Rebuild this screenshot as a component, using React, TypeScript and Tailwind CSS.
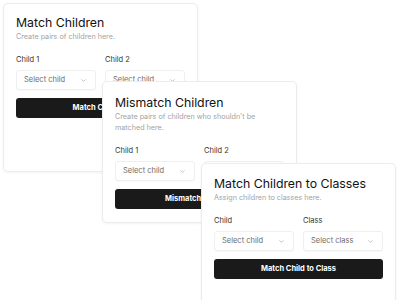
import React from "react";

function Chevron() {
  return (
    <svg width="7" height="7" viewBox="0 0 24 24" fill="none" stroke="#9ca3af" strokeWidth="2.2" strokeLinecap="round" strokeLinejoin="round">
      <path d="m6 9 6 6 6-6" />
    </svg>
  );
}

function Select({ label }: { label: string }) {
  return (
    <div className="flex h-[20px] items-center justify-between rounded-[3px] border border-[#efefef] bg-white pl-[7px] pr-[8px] shadow-[0_1px_1px_rgba(0,0,0,0.03)]">
      <span className="text-[7.5px] leading-none text-[#6b6b6b]">{label}</span>
      <Chevron />
    </div>
  );
}

type Field = { label: string; placeholder: string };

function Card({
  className,
  title,
  desc,
  fields,
  button,
}: {
  className: string;
  title: string;
  desc: React.ReactNode;
  fields: Field[];
  button: string;
}) {
  return (
    <div className={"absolute w-[195px] rounded-[5px] border border-[#ececec] bg-white px-[12px] shadow-[0_1px_3px_rgba(0,0,0,0.05)] " + className}>
      <div className="pt-[1px] text-[12.3px] leading-[15px] font-normal text-[#111111]">{title}</div>
      <div className="mt-[1px] text-[7.2px] leading-[11px] text-[#a3a3a3]">{desc}</div>
      <div className="mt-[13px] grid grid-cols-2 gap-x-[9px]">
        {fields.map((f) => (
          <div key={f.label} className="flex flex-col">
            <div className="text-[7.5px] leading-[10px] text-[#333333]">{f.label}</div>
            <div className="mt-[5px]">
              <Select label={f.placeholder} />
            </div>
          </div>
        ))}
      </div>
      <button className="mt-[8px] flex h-[20px] w-full items-center justify-center rounded-[3px] bg-[#1a1a1a] text-[7.5px] font-bold text-white">
        {button}
      </button>
    </div>
  );
}

export default function App() {
  return (
    <div className="relative h-[300px] w-[400px] overflow-hidden bg-white" style={{ fontFamily: "Inter, 'Noto Sans', sans-serif" }}>
      <Card
        className="left-[3px] top-[3px] h-[169px] pt-[10px]"
        title="Match Children"
        desc="Create pairs of children here."
        fields={[
          { label: "Child 1", placeholder: "Select child" },
          { label: "Child 2", placeholder: "Select child" },
        ]}
        button="Match Children"
      />
      <Card
        className="left-[102px] top-[81px] pt-[12px] pb-[13px]"
        title="Mismatch Children"
        desc={
          <>
            Create pairs of children who shouldn't be
            <br />
            matched here.
          </>
        }
        fields={[
          { label: "Child 1", placeholder: "Select child" },
          { label: "Child 2", placeholder: "Select child" },
        ]}
        button="Mismatch Children"
      />
      <Card
        className="left-[201px] top-[163px] h-[160px] pt-[11px]"
        title="Match Children to Classes"
        desc="Assign children to classes here."
        fields={[
          { label: "Child", placeholder: "Select child" },
          { label: "Class", placeholder: "Select class" },
        ]}
        button="Match Child to Class"
      />
    </div>
  );
}
